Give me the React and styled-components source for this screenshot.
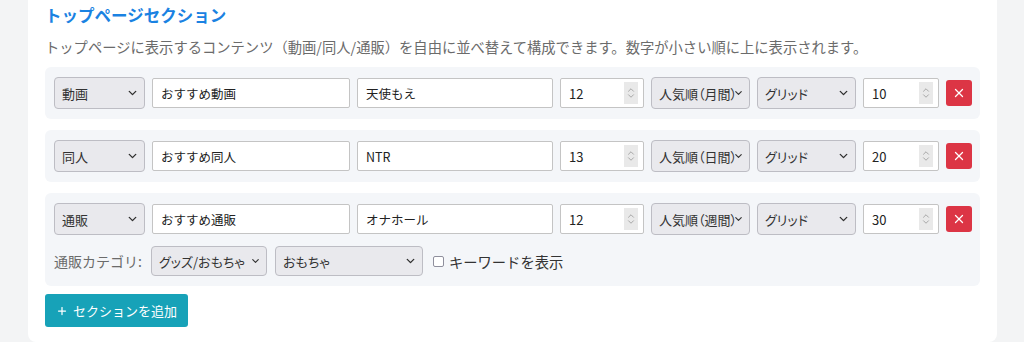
import React from 'react'
import styled, { createGlobalStyle } from 'styled-components'
import { ChevronDown, ChevronUp, X, Plus } from 'lucide-react'

const GlobalStyle = createGlobalStyle`
  html, body {
    margin: 0;
    padding: 0;
    background: #f3f4f5;
    font-family: "Noto Sans CJK JP", "Noto Sans", sans-serif;
    color: #333;
  }
  * { box-sizing: border-box; }
`

const Page = styled.div`
  padding: 0 27px 1px 28px;
`

const Card = styled.div`
  background: #fff;
  border-radius: 0 0 8px 8px;
  padding: 2px 17px 15px 17px;
`

const Title = styled.h2`
  margin: 0;
  font-size: 16.5px;
  line-height: 26px;
  font-weight: 700;
  color: #1a82e2;
`

const Lead = styled.p`
  margin: 8px 0 9px;
  font-size: 14.3px;
  line-height: 22px;
  color: #6b6b6b;
`

const Sections = styled.div`
  display: flex;
  flex-direction: column;
  gap: 11px;
`

const SectionBox = styled.div`
  background: #f4f6f9;
  border-radius: 6px;
  padding: 10px 9px 10px 9px;
  display: flex;
  flex-direction: column;
  gap: 11px;
`

const Line = styled.div`
  display: flex;
  align-items: center;
  gap: ${p => p.$gap || 7}px;
`

const SelectWrap = styled.div`
  position: relative;
  width: ${p => p.$w}px;
  flex: none;
`

const Select = styled.select`
  appearance: none;
  width: 100%;
  height: ${p => p.$h || 32}px;
  background: #e9e9ed;
  border: 1px solid #bdbdc4;
  border-radius: 4px;
  padding: 0 14px 0 7px;
  font-family: inherit;
  font-size: 13px;
  font-feature-settings: "palt";
  color: #333;
  outline: none;
`

const Chevron = styled(ChevronDown)`
  position: absolute;
  right: 6px;
  top: 50%;
  transform: translateY(-50%);
  pointer-events: none;
  color: #333;
`

const TextInput = styled.input`
  width: ${p => p.$w}px;
  flex: none;
  height: 30px;
  border: 1px solid #c4c4c4;
  border-radius: 2px;
  background: #fff;
  padding: 0 8px;
  font-family: inherit;
  font-size: 12.5px;
  color: #222;
  outline: none;
`

const NumberWrap = styled.div`
  position: relative;
  width: ${p => p.$w}px;
  flex: none;
`

const NumberField = styled(TextInput)`
  width: 100%;
  font-size: 13px;
  -moz-appearance: textfield;
  &::-webkit-inner-spin-button,
  &::-webkit-outer-spin-button {
    -webkit-appearance: none;
    margin: 0;
  }
`

const Spinner = styled.span`
  position: absolute;
  right: 6px;
  top: 50%;
  transform: translateY(-50%);
  width: 14px;
  height: 22px;
  background: #e9e9e9;
  display: flex;
  flex-direction: column;
  align-items: center;
  justify-content: center;
  color: #9a9a9a;
  pointer-events: none;
  svg { margin: -2px 0; }
`

const DeleteButton = styled.button`
  width: 26px;
  height: 26px;
  flex: none;
  border: none;
  border-radius: 3px;
  background: #dc3545;
  color: #fff;
  display: flex;
  align-items: center;
  justify-content: center;
  padding: 0;
`

const Label = styled.span`
  font-size: 14px;
  color: #6b6b6b;
  margin-right: 1px;
`

const CheckLabel = styled.label`
  display: flex;
  align-items: center;
  gap: 5px;
  margin-left: 2px;
  font-size: 14.3px;
  color: #333;
`

const Check = styled.input`
  appearance: none;
  width: 11px;
  height: 11px;
  margin: 0;
  border: 1px solid #8f8f9d;
  border-radius: 2px;
  background: #fff;
`

const AddButton = styled.button`
  margin-top: 8px;
  height: 33px;
  padding: 0 11px;
  border: none;
  border-radius: 3px;
  background: #17a2b8;
  color: #fff;
  font-family: inherit;
  font-size: 13px;
  display: flex;
  align-items: center;
  gap: 5px;
`

const sections = [
  { type: '動画', title: 'おすすめ動画', keyword: '天使もえ', count: 12, sort: '人気順（月間）', order: 10 },
  { type: '同人', title: 'おすすめ同人', keyword: 'NTR', count: 13, sort: '人気順（日間）', order: 20 },
  { type: '通販', title: 'おすすめ通販', keyword: 'オナホール', count: 12, sort: '人気順（週間）', order: 30, goods: true },
]

function Dropdown({ w, h, value, chevron = 13 }) {
  return (
    <SelectWrap $w={w}>
      <Select $h={h} defaultValue={value}>
        <option>{value}</option>
      </Select>
      <Chevron size={chevron} strokeWidth={2.5} />
    </SelectWrap>
  )
}

function NumberInput({ w, value }) {
  return (
    <NumberWrap $w={w}>
      <NumberField type="number" defaultValue={value} />
      <Spinner>
        <ChevronUp size={10} strokeWidth={2} />
        <ChevronDown size={10} strokeWidth={2} />
      </Spinner>
    </NumberWrap>
  )
}

function SectionRow({ s }) {
  return (
    <SectionBox>
      <Line>
        <Dropdown w={91} value={s.type} />
        <TextInput $w={198} defaultValue={s.title} />
        <TextInput $w={196} defaultValue={s.keyword} />
        <NumberInput w={84} value={s.count} />
        <Dropdown w={99} value={s.sort} chevron={11} />
        <Dropdown w={99} value="グリッド" />
        <NumberInput w={76} value={s.order} />
        <DeleteButton><X size={14} strokeWidth={2.2} /></DeleteButton>
      </Line>
      {s.goods && (
        <Line $gap={8}>
          <Label>通販カテゴリ:</Label>
          <Dropdown w={116} h={30} value="グッズ/おもちゃ" chevron={11} />
          <Dropdown w={148} h={30} value="おもちゃ" />
          <CheckLabel>
            <Check type="checkbox" />
            キーワードを表示
          </CheckLabel>
        </Line>
      )}
    </SectionBox>
  )
}

export default function App() {
  return (
    <Page>
      <GlobalStyle />
      <Card>
        <Title>トップページセクション</Title>
        <Lead>トップページに表示するコンテンツ（動画/同人/通販）を自由に並べ替えて構成できます。数字が小さい順に上に表示されます。</Lead>
        <Sections>
          {sections.map(s => <SectionRow key={s.order} s={s} />)}
        </Sections>
        <AddButton><Plus size={12} strokeWidth={2.5} />セクションを追加</AddButton>
      </Card>
    </Page>
  )
}
